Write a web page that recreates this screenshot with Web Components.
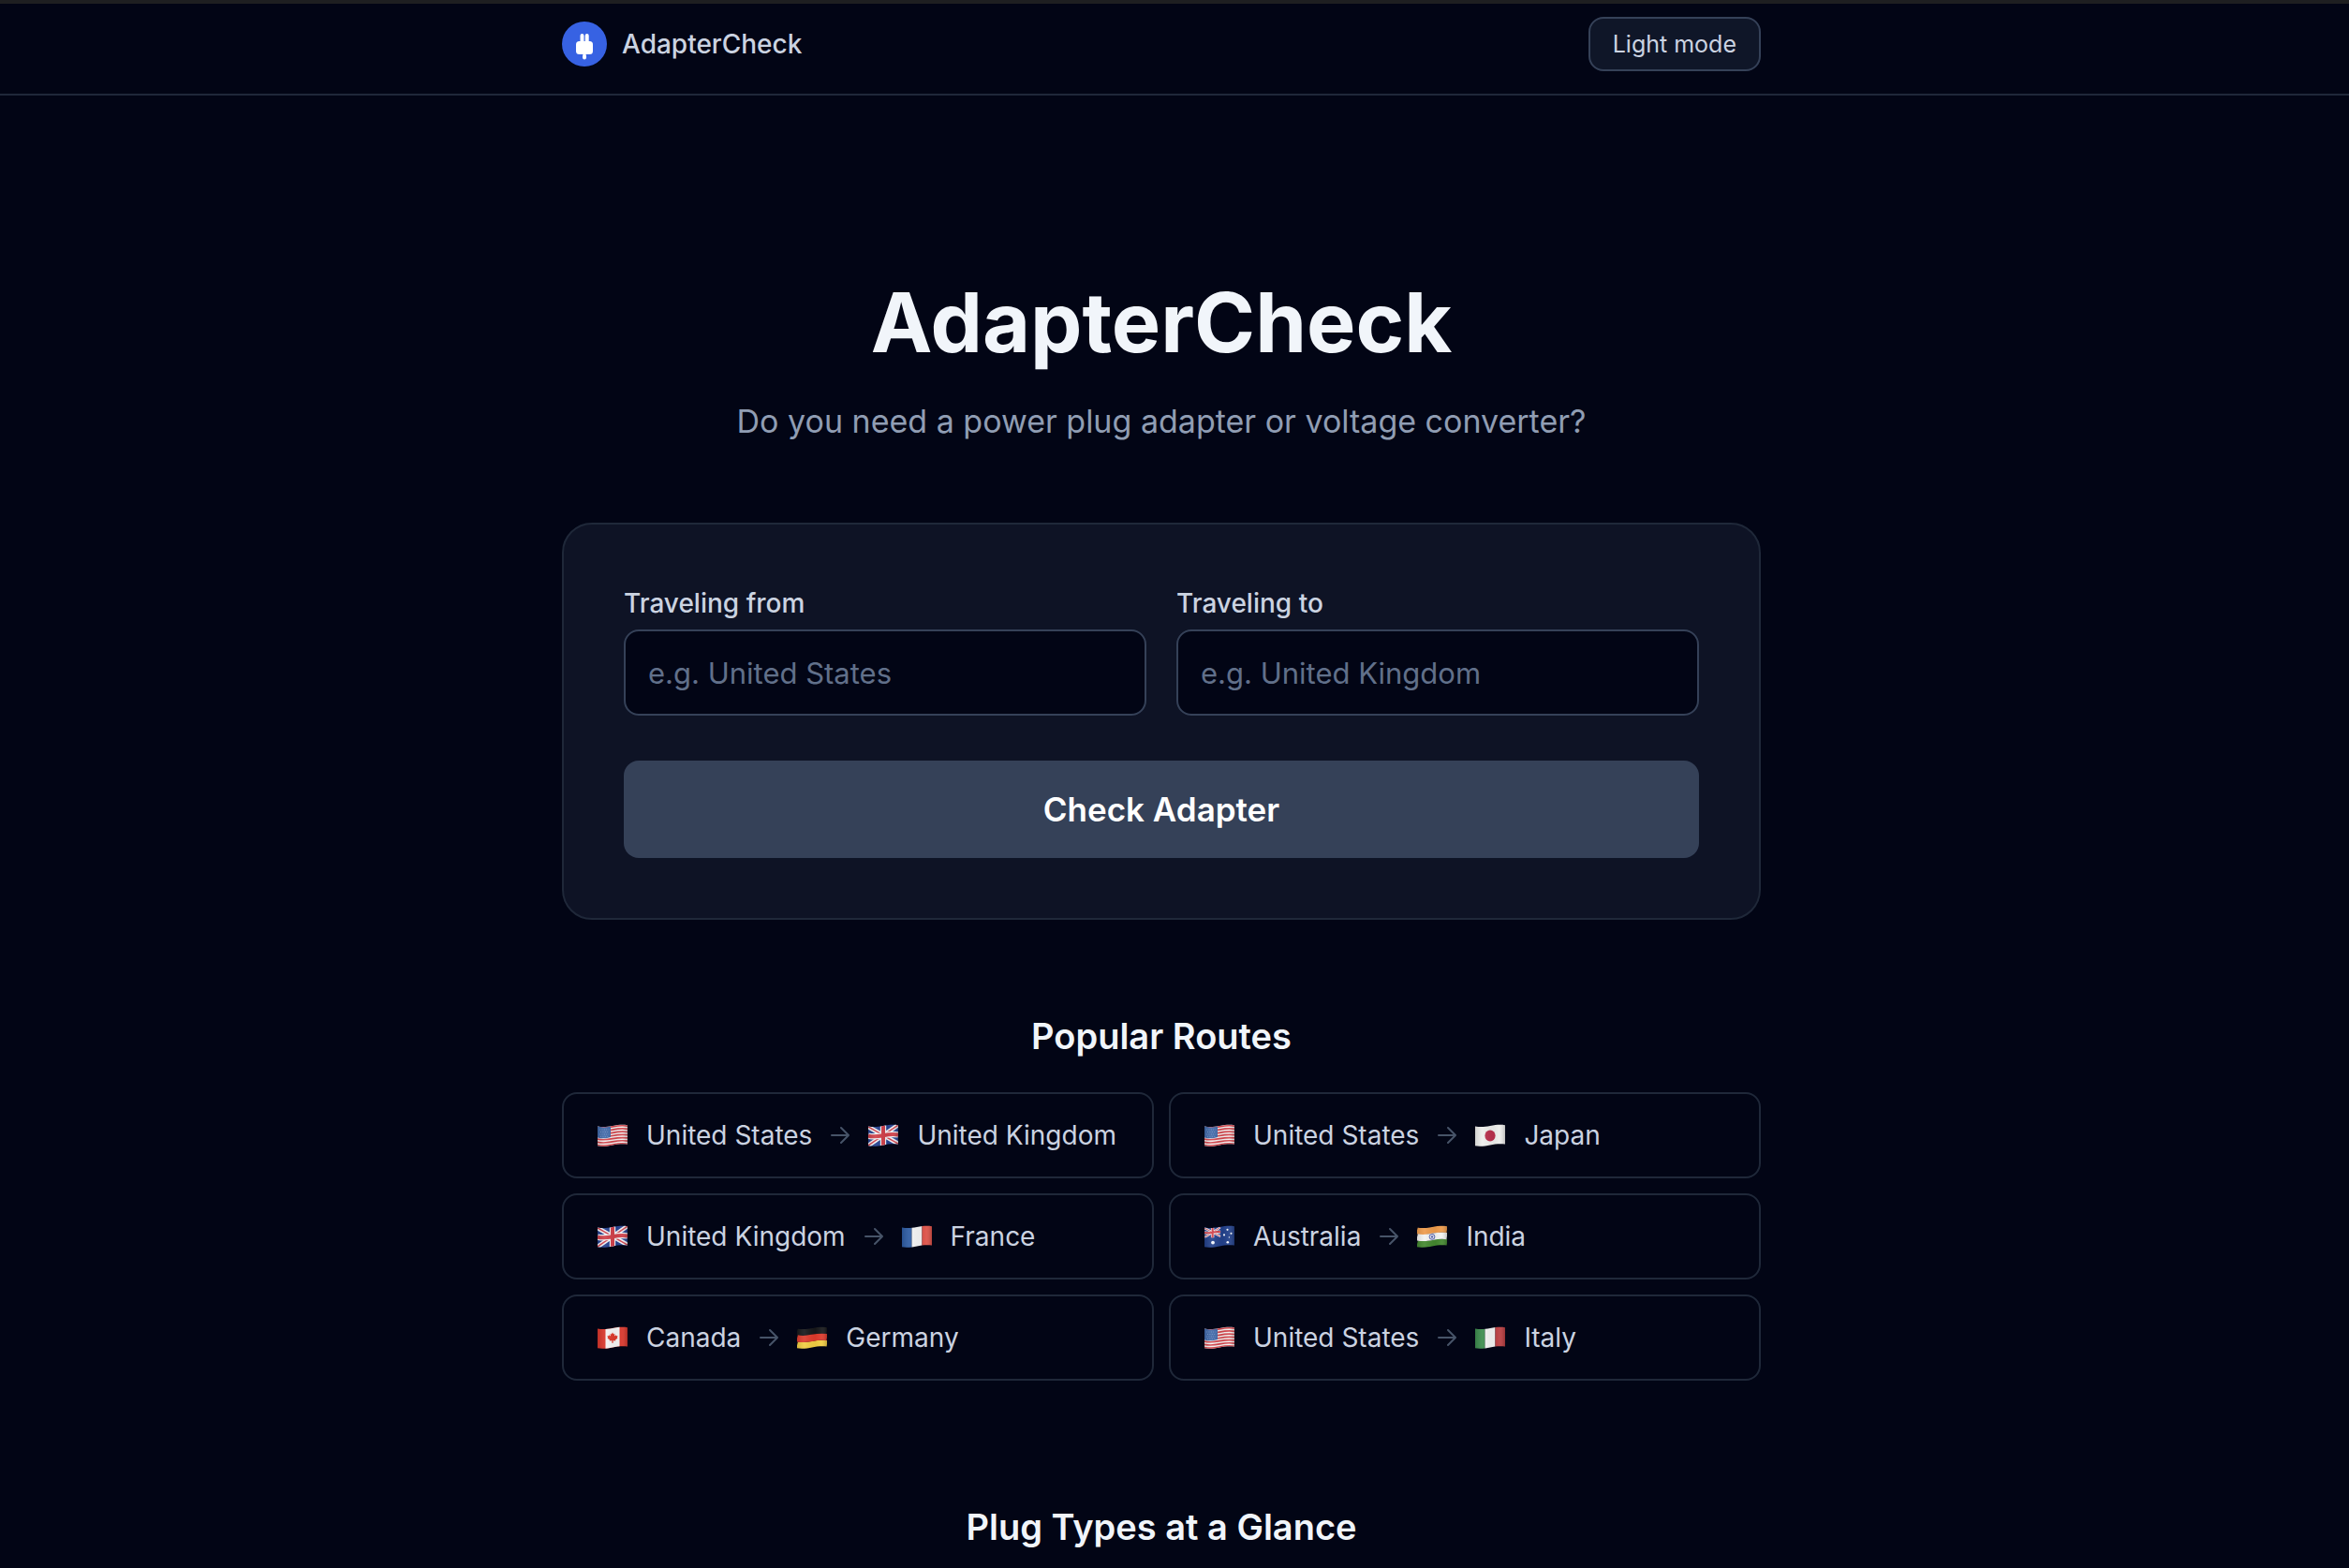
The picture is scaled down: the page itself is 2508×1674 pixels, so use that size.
<!DOCTYPE html>
<html lang="en">
<head>
<meta charset="utf-8">
<meta name="viewport" content="width=device-width, initial-scale=1">
<title>AdapterCheck</title>
<style>
  :root {
    --bg: #020515;
    --panel: #0e1325;
    --line: #1f2839;
    --line-strong: #354158;
    --text: #cbd3e1;
    --heading: #f1f5fa;
    --muted: #909db3;
    --faint: #61708a;
    --gutter: 28px;
  }

  body {
    margin: 0;
    background: var(--bg);
    color: var(--text);
    border-top: 4px solid #1e1f21;
    font-family: Inter, "Liberation Sans", sans-serif;
  }
</style>
</head>
<body>
<adapter-header>AdapterCheck</adapter-header>
<adapter-page>
  <adapter-hero>
    AdapterCheck
    <span slot="tagline">Do you need a power plug adapter or voltage converter?</span>
  </adapter-hero>
  <adapter-form></adapter-form>
  <page-section heading="Popular Routes">
    <route-list>
      <travel-route from="us" to="gb"></travel-route>
      <travel-route from="us" to="jp"></travel-route>
      <travel-route from="gb" to="fr"></travel-route>
      <travel-route from="au" to="in"></travel-route>
      <travel-route from="ca" to="de"></travel-route>
      <travel-route from="us" to="it"></travel-route>
    </route-list>
  </page-section>
  <page-section heading="Plug Types at a Glance"></page-section>
</adapter-page>

<script>
const countries = {
  us: "United States",
  gb: "United Kingdom",
  jp: "Japan",
  fr: "France",
  au: "Australia",
  in: "India",
  ca: "Canada",
  de: "Germany",
  it: "Italy",
};

// one waving horizontal line across the flag, starting at height y
const wave = (y) => `M0 ${y}C5 ${y + 1.2} 10 ${y + 0.8} 16 ${y - 0.4}S27 ${y - 1.9} 32 ${y - 1.2}`;
const stripe = (y, width, color) =>
  `<path d="${wave(y)}" fill="none" stroke="${color}" stroke-width="${width}"/>`;
const thirds = (a, b, c) => stripe(5.6, 7.4, a) + stripe(20.2, 7.8, c) + stripe(12.8, 7.2, b);
const columns = (a, b, c) => `
  <path fill="${a}" d="M0 0h10.5v24H0z"/>
  <path fill="${b}" d="M10.5 0h11v24h-11z"/>
  <path fill="${c}" d="M21.5 0H32v24H21.5z"/>`;

const unionJack = `
  <path fill="#24408e" d="M0 0h32v24H0z"/>
  <path d="M0 3l32 18M0 23L32 1" stroke="#f0eff3" stroke-width="4.6"/>
  <path d="M0 3l32 18M0 23L32 1" stroke="#d0404a" stroke-width="1.5"/>
  <path d="${wave(12.6)}M16 0v24" fill="none" stroke="#f0eff3" stroke-width="6.4"/>
  <path d="${wave(12.6)}M16 0v24" fill="none" stroke="#d0404a" stroke-width="4"/>`;

const flags = {
  us: `<path fill="#f3eeee" d="M0 0h32v24H0z"/>
    ${[3.3, 6.5, 9.7, 12.9, 16.1, 19.3, 22.5].map((y) => stripe(y, 1.7, "#d2434a")).join("")}
    <path fill="#3f68a8" d="M0 2c5 2 9 2 14 .4V14c-5 1.6-9 1.6-14 .4z"/>
    <path d="M2 6h11M3 8.5h10M2 11h11M3 13.3h9" stroke="#7d9bc8" stroke-width=".8" stroke-dasharray="1 1.4"/>`,
  gb: unionJack,
  jp: `<path fill="#eeeeec" d="M0 0h32v24H0z"/><ellipse cx="16" cy="12.4" rx="5.6" ry="6" fill="#b9304d"/>`,
  fr: columns("#2c5ba3", "#f4f4f4", "#dd5147"),
  au: `<path fill="#22408a" d="M0 0h32v24H0z"/>
    <clipPath id="canton"><path d="M0 0h32v24H0z"/></clipPath>
    <g transform="translate(0 1.6) scale(.54 .5)" clip-path="url(#canton)">${unionJack}</g>
    <g fill="#f1f4fa"><circle cx="9" cy="18.6" r="1.9"/><circle cx="24.5" cy="4.8" r="1.1"/>
    <circle cx="21" cy="10.4" r="1.1"/><circle cx="28.5" cy="8.8" r="1.1"/>
    <circle cx="26.4" cy="12.9" r=".7"/><circle cx="24.8" cy="18.3" r="1.3"/></g>`,
  in: `${thirds("#ee9b4b", "#f3f3f1", "#43882f")}
    <circle cx="16" cy="12.4" r="2.9" fill="#d9dcee" stroke="#4b59a8" stroke-width=".9"/>
    <circle cx="16" cy="12.4" r="1" fill="#3a489c"/>`,
  ca: `<path fill="#d8352a" d="M0 0h32v24H0z"/>
    <path fill="#f5f4f4" d="M8.5 0h15v24h-15z"/>
    <path fill="#dd3a2c" d="M16 6.4l1.2 2 1.2-.6-.4 2.8 1.7-1.4.4 1 1.5-.2-.7 2 .7.4-2.6 2.2.3 1-2.7-.4.1 2.6h-1.4l.1-2.6-2.7.4.3-1-2.6-2.2.7-.4-.7-2 1.5.2.4-1 1.7 1.4-.4-2.8 1.2.6z"/>`,
  de: thirds("#17181a", "#de3a2b", "#f2ce42"),
  it: columns("#3c8c4d", "#f3f3f2", "#ba3d40"),
};

class CountryFlag extends HTMLElement {
  constructor() {
    super();
    this.attachShadow({ mode: "open" });
  }

  connectedCallback() {
    this.shadowRoot.innerHTML = `
      <style>
        :host { display: block; flex: none; }
        svg { display: block; width: 32px; height: 24px; }
      </style>
      <svg viewBox="0 0 32 24" aria-hidden="true">
        <defs>
          <clipPath id="cloth">
            <path d="${wave(2.4)}V21.6C27 20.8 21 21.4 16 22.4S5 24.2 0 23.2z"/>
          </clipPath>
          <linearGradient id="fold">
            <stop offset="0" stop-color="#000" stop-opacity=".12"/>
            <stop offset=".25" stop-color="#fff" stop-opacity=".08"/>
            <stop offset=".6" stop-color="#000" stop-opacity=".04"/>
            <stop offset=".8" stop-color="#fff" stop-opacity=".06"/>
            <stop offset="1" stop-color="#000" stop-opacity=".2"/>
          </linearGradient>
        </defs>
        <g clip-path="url(#cloth)">
          ${flags[this.getAttribute("code")]}
          <path fill="url(#fold)" d="M0 0h32v24H0z"/>
        </g>
      </svg>`;
  }
}

class AdapterHeader extends HTMLElement {
  constructor() {
    super();
    this.attachShadow({ mode: "open" });
    this.shadowRoot.innerHTML = `
      <style>
        :host {
          display: block;
          padding: 14px var(--gutter) 24px 0;
          border-bottom: 2px solid var(--line);
        }
        header {
          display: flex;
          align-items: center;
          justify-content: space-between;
          max-width: 1280px;
          margin: 0 auto;
        }
        a {
          display: flex;
          align-items: center;
          gap: 16px;
          color: inherit;
          font-size: 28px;
          font-weight: 500;
          line-height: 40px;
          text-decoration: none;
        }
        svg { display: block; width: 48px; height: 48px; }
        button {
          padding: 10px 24px;
          border: 2px solid var(--line-strong);
          border-radius: 16px;
          background: #0f1628;
          color: inherit;
          font: 400 25px/34px Inter, "Liberation Sans", sans-serif;
        }
      </style>
      <header>
        <a href="#">
          <svg viewBox="0 0 48 48" aria-hidden="true">
            <circle cx="24" cy="24" r="24" fill="#3762e3"/>
            <g fill="#fff">
              <rect x="19.5" y="13" width="4" height="12" rx="2"/>
              <rect x="24.7" y="13" width="4" height="12" rx="2"/>
              <rect x="15" y="21" width="18" height="14" rx="3.5"/>
              <rect x="22" y="34.5" width="4" height="6" rx="2"/>
            </g>
          </svg>
          <slot></slot>
        </a>
        <button type="button">Light mode</button>
      </header>`;
  }
}

class AdapterPage extends HTMLElement {
  constructor() {
    super();
    this.attachShadow({ mode: "open" });
    this.shadowRoot.innerHTML = `
      <style>
        :host { display: block; padding-right: var(--gutter); }
        main { max-width: 1280px; margin: 0 auto; padding-top: 194px; }
      </style>
      <main><slot></slot></main>`;
  }
}

class AdapterHero extends HTMLElement {
  constructor() {
    super();
    this.attachShadow({ mode: "open" });
    this.shadowRoot.innerHTML = `
      <style>
        :host { display: block; margin-bottom: 80px; text-align: center; }
        h1 {
          margin: 0 0 30px;
          color: var(--heading);
          font-size: 88px;
          font-weight: 700;
          line-height: 96px;
        }
        p { margin: 0; color: var(--muted); font-size: 34px; line-height: 56px; }
      </style>
      <h1><slot></slot></h1>
      <p><slot name="tagline"></slot></p>`;
  }
}

class AdapterForm extends HTMLElement {
  constructor() {
    super();
    this.attachShadow({ mode: "open" });
    this.shadowRoot.innerHTML = `
      <style>
        :host { display: block; }
        form {
          display: grid;
          gap: 48px;
          padding: 64px;
          border: 2px solid var(--line);
          border-radius: 32px;
          background: var(--panel);
        }
        .fields { display: grid; grid-template-columns: 1fr 1fr; gap: 32px; }
        .field { display: grid; gap: 8px; }
        label { font-size: 28px; font-weight: 500; line-height: 40px; }
        input {
          box-sizing: border-box;
          width: 100%;
          height: 92px;
          padding: 0 24px;
          border: 2px solid var(--line-strong);
          border-radius: 16px;
          background: var(--bg);
          color: var(--text);
          font: 400 31px/48px Inter, "Liberation Sans", sans-serif;
        }
        input::placeholder { color: var(--faint); opacity: 1; }
        button {
          padding: 24px;
          border: none;
          border-radius: 16px;
          background: var(--line-strong);
          color: #fff;
          font: 600 35px/56px Inter, "Liberation Sans", sans-serif;
        }
      </style>
      <form>
        <div class="fields">
          <div class="field">
            <label for="from">Traveling from</label>
            <input id="from" type="text" placeholder="e.g. United States">
          </div>
          <div class="field">
            <label for="to">Traveling to</label>
            <input id="to" type="text" placeholder="e.g. United Kingdom">
          </div>
        </div>
        <button type="button">Check Adapter</button>
      </form>`;
  }
}

class PageSection extends HTMLElement {
  constructor() {
    super();
    this.attachShadow({ mode: "open" });
  }

  connectedCallback() {
    this.shadowRoot.innerHTML = `
      <style>
        :host { display: block; padding-top: 96px; }
        :host(:last-of-type) { padding-top: 128px; }
        h2 {
          margin: 0;
          color: var(--heading);
          font-size: 38px;
          font-weight: 600;
          line-height: 56px;
          text-align: center;
        }
        ::slotted(*) { margin-top: 32px; }
      </style>
      <section>
        <h2>${this.getAttribute("heading")}</h2>
        <slot></slot>
      </section>`;
  }
}

class RouteList extends HTMLElement {
  constructor() {
    super();
    this.attachShadow({ mode: "open" });
    this.shadowRoot.innerHTML = `
      <style>
        :host { display: grid; grid-template-columns: 1fr 1fr; gap: 16px; }
      </style>
      <slot></slot>`;
  }
}

class TravelRoute extends HTMLElement {
  constructor() {
    super();
    this.attachShadow({ mode: "open" });
  }

  connectedCallback() {
    const from = this.getAttribute("from");
    const to = this.getAttribute("to");
    this.shadowRoot.innerHTML = `
      <style>
        :host { display: block; }
        button {
          display: flex;
          align-items: center;
          gap: 20px;
          width: 100%;
          padding: 24px 36px;
          border: 2px solid var(--line);
          border-radius: 16px;
          background: none;
          color: inherit;
          font: 400 28px/40px Inter, "Liberation Sans", sans-serif;
          text-align: left;
        }
        svg {
          flex: none;
          width: 20px;
          height: 20px;
          fill: none;
          stroke: #475468;
          stroke-width: 2;
          stroke-linecap: round;
          stroke-linejoin: round;
        }
      </style>
      <button type="button">
        <country-flag code="${from}"></country-flag>
        <span>${countries[from]}</span>
        <svg viewBox="0 0 20 20" aria-hidden="true"><path d="M1 10h18M11 2l8 8-8 8"/></svg>
        <country-flag code="${to}"></country-flag>
        <span>${countries[to]}</span>
      </button>`;
  }
}

customElements.define("country-flag", CountryFlag);
customElements.define("adapter-header", AdapterHeader);
customElements.define("adapter-page", AdapterPage);
customElements.define("adapter-hero", AdapterHero);
customElements.define("adapter-form", AdapterForm);
customElements.define("page-section", PageSection);
customElements.define("route-list", RouteList);
customElements.define("travel-route", TravelRoute);
</script>
</body>
</html>
